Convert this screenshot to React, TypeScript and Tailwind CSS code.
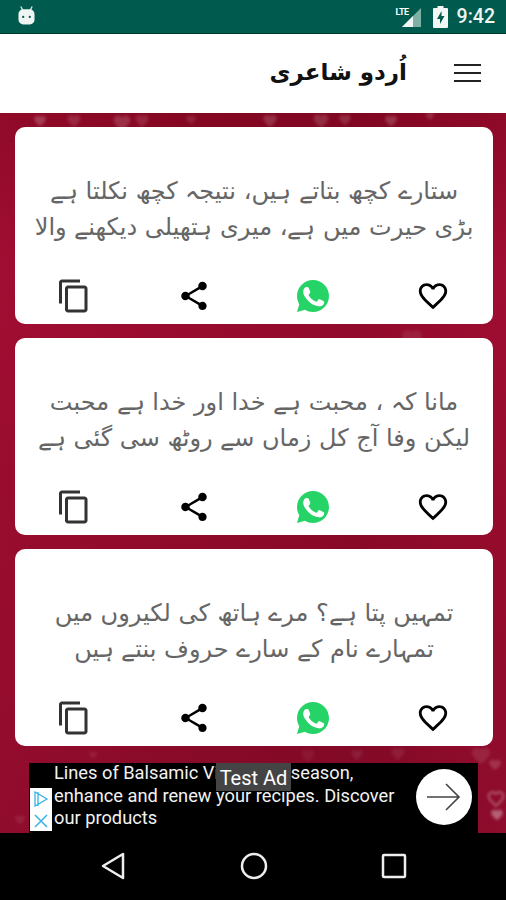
import React from "react";

const quotes = [
  ["ستارے کچھ بتاتے ہیں، نتیجہ کچھ نکلتا ہے", "بڑی حیرت میں ہے، میری ہتھیلی دیکھنے والا"],
  ["مانا کہ ، محبت ہے خدا اور خدا ہے محبت", "لیکن وفا آج کل زماں سے روٹھ سی گئی ہے"],
  ["تمہیں پتا ہے؟ مرے ہاتھ کی لکیروں میں", "تمہارے نام کے سارے حروف بنتے ہیں"],
];

// soft hearts in the wallpaper, page coordinates
const hearts = [
  { x: 33, y: 114, s: 14, o: 0.2 },
  { x: 66, y: 113, s: 16, o: 0.12 },
  { x: 112, y: 113, s: 20, o: 0.16 },
  { x: 134, y: 113, s: 16, o: 0.12 },
  { x: 185, y: 114, s: 12, o: 0.1 },
  { x: 262, y: 113, s: 16, o: 0.16 },
  { x: 312, y: 112, s: 18, o: 0.15 },
  { x: 338, y: 113, s: 14, o: 0.14 },
  { x: 384, y: 114, s: 14, o: 0.18 },
  { x: 425, y: 111, s: 10, o: 0.14 },
  { x: 400, y: 327, s: 24, o: 0.08 },
  { x: 300, y: 748, s: 16, o: 0.06 },
  { x: 350, y: 748, s: 14, o: 0.08 },
  { x: 390, y: 746, s: 16, o: 0.08 },
  { x: 470, y: 745, s: 22, o: 0.1 },
  { x: 488, y: 758, s: 14, o: 0.16 },
  { x: 490, y: 808, s: 14, o: 0.35 },
  { x: 14, y: 814, s: 12, o: 0.08 },
  { x: 88, y: 750, s: 10, o: 0.08 },
];

const HeartPath = "M12 21l-1.5-1.3C5.4 15.1 2 12.1 2 8.4 2 5.4 4.4 3 7.5 3c1.7 0 3.4.8 4.5 2.1C13.1 3.8 14.8 3 16.5 3 19.6 3 22 5.4 22 8.4c0 3.7-3.4 6.7-8.5 11.3L12 21z";

const CardIcons = () => (
  <div className="flex items-center h-[36px] pl-[41px]">
    <svg width="36" height="36" viewBox="0 0 24 24" fill="#333">
      <path d="M16 1H4c-1.1 0-2 .9-2 2v14h2V3h12V1zm3 4H8c-1.1 0-2 .9-2 2v14c0 1.1.9 2 2 2h11c1.1 0 2-.9 2-2V7c0-1.1-.9-2-2-2zm0 16H8V7h11v14z" />
    </svg>
    <svg width="34" height="34" viewBox="0 0 24 24" fill="#000" className="ml-[85px]">
      <path d="M18 16.08c-.76 0-1.44.3-1.96.77L8.91 12.7c.05-.23.09-.46.09-.7s-.04-.47-.09-.7l7.05-4.11c.54.5 1.25.81 2.04.81 1.66 0 3-1.34 3-3s-1.34-3-3-3-3 1.34-3 3c0 .24.04.47.09.7L8.04 9.81C7.5 9.31 6.79 9 6 9c-1.66 0-3 1.34-3 3s1.34 3 3 3c.79 0 1.5-.31 2.04-.81l7.12 4.16c-.05.21-.08.43-.08.65 0 1.61 1.31 2.92 2.92 2.92s2.92-1.31 2.92-2.92-1.31-2.92-2.92-2.92z" />
    </svg>
    <svg width="32" height="32" viewBox="0 0 32 32" className="ml-[86px]">
      <path fill="#25d366" d="M16 0C7.2 0 0 7.2 0 16c0 3 .8 5.800 2.300 8.300L0 32l8-2.200C10.300 31.200 13.100 32 16 32c8.800 0 16-7.200 16-16S24.800 0 16 0z" />
      <path fill="#fff" d="M11.600 7.800c-.4-.9-.8-.9-1.200-.9h-1c-.4 0-.9.100-1.400.7-.5.500-1.800 1.800-1.800 4.300s1.900 5 2.100 5.300c.3.400 3.600 5.700 8.900 7.800 4.400 1.700 5.300 1.400 6.200 1.300.9-.1 3-1.200 3.400-2.400.4-1.200.4-2.200.3-2.400-.1-.2-.5-.3-1-.6s-3-1.500-3.500-1.700c-.5-.2-.8-.3-1.100.2-.3.500-1.300 1.700-1.600 2-.3.300-.6.400-1.100.1-.5-.3-2.200-.8-4.200-2.600-1.500-1.400-2.600-3.100-2.900-3.600-.3-.5 0-.8.200-1 .2-.2.5-.6.800-.9.200-.3.300-.5.500-.9.200-.3.100-.7 0-.9-.2-.4-1.100-2.900-1.600-3.800z" />
    </svg>
    <svg width="34" height="34" viewBox="0 0 24 24" fill="#000" className="ml-[87px]">
      <path d="M16.500 3c-1.740 0-3.410.81-4.500 2.090C10.910 3.810 9.240 3 7.500 3 4.420 3 2 5.420 2 8.500c0 3.780 3.400 6.860 8.550 11.540L12 21.350l1.450-1.320C18.600 15.360 22 12.280 22 8.500 22 5.420 19.580 3 16.500 3zm-4.400 15.550l-.1.100-.1-.1C7.140 14.240 4 11.390 4 8.500 4 6.500 5.500 5 7.500 5c1.540 0 3.040.99 3.570 2.360h1.870C13.460 5.990 14.960 5 16.500 5c2 0 3.500 1.500 3.500 3.500 0 2.890-3.140 5.740-7.900 10.050z" />
    </svg>
  </div>
);

const App: React.FC = (): JSX.Element => (
  <div className="flex flex-col w-[506px] h-[900px] overflow-hidden relative font-['Roboto',sans-serif]">
    {/* status bar */}
    <div className="flex items-center justify-between h-[34px] bg-[#005a4e] border-b border-[#00382f] pl-[18px] pr-[11px] shrink-0">
      <svg width="17" height="19" viewBox="0 0 18 19" className="-mt-[2px]">
        <path d="M3 0l2 4M15 0l-2 4" stroke="#cfe3dc" strokeWidth="1.500" />
        <rect x="0.500" y="3" width="17" height="16" rx="5" fill="#eef5f2" />
        <circle cx="5.500" cy="11" r="1.200" fill="#005a4e" />
        <circle cx="12.500" cy="11" r="1.200" fill="#005a4e" />
      </svg>
      <div className="flex items-center">
        <div className="relative w-[26px] h-[22px] mr-[11px]">
          <svg width="26" height="22" viewBox="0 0 26 22">
            <path d="M25 2v19H6z" fill="#7fb0a6" />
            <path d="M17 10v11H6z" fill="#f2f7f5" />
          </svg>
          <span className="absolute left-0 top-0 text-[9px] leading-[12px] font-bold text-white tracking-[-0.5px]">LTE</span>
        </div>
        <svg width="15" height="22" viewBox="0 0 15 22" className="mr-[9px]">
          <path d="M4.500 0h6v2H14a1 1 0 0 1 1 1v18a1 1 0 0 1-1 1H1a1 1 0 0 1-1-1V3a1 1 0 0 1 1-1h3.500z" fill="#f2f7f5" />
          <path d="M8.500 5L4 13h3v5l4.500-8h-3z" fill="#005a4e" />
        </svg>
        <span className="text-[19.500px] leading-none font-medium text-[#eef5f2]">9:42</span>
      </div>
    </div>

    {/* toolbar */}
    <div className="flex items-center justify-end h-[79px] bg-white pr-[25px] shrink-0">
      <span dir="rtl" className="mr-[47px] -mt-[3px] text-[23px] leading-none font-bold text-[#111] font-['DejaVu_Sans',sans-serif]">
        اُردو شاعری
      </span>
      <div className="flex flex-col gap-[6px] w-[27px] -mt-[1px]">
        <div className="h-[2px] bg-[#222]" />
        <div className="h-[2px] bg-[#222]" />
        <div className="h-[2px] bg-[#222]" />
      </div>
    </div>

    {/* content */}
    <div className="relative flex-1 bg-[linear-gradient(180deg,#850722_0%,#9c0c30_22%,#900a29_55%,#8c0a29_80%,#850a29_100%)] overflow-hidden">
      <div className="absolute inset-0 bg-[linear-gradient(90deg,#b0123a44_0%,#00000000_35%,#5a041822_70%,#b0123a33_100%)]" />
      <div className="relative flex flex-col gap-[14px] pt-[14px] pl-[15px] pr-[13px]">
        {quotes.map((lines, i) => (
          <div key={i} className="flex flex-col h-[197px] bg-white rounded-[10px]">
            <div dir="rtl" className="flex flex-col items-center pt-[46px] h-[151px] text-[24px] leading-[36px] text-[#666] font-['DejaVu_Sans',sans-serif]">
              {lines.map((l) => (
                <span key={l} className="whitespace-nowrap">{l}</span>
              ))}
            </div>
            <CardIcons />
          </div>
        ))}
      </div>
    </div>

    {/* faint hearts over the wallpaper */}
    <svg width="506" height="900" viewBox="0 0 506 900" className="absolute left-0 top-0 pointer-events-none blur-[1.500px]">
      {hearts.map((h) => (
        <path key={h.x + "-" + h.y} d={HeartPath} fill="#ffffff" opacity={h.o} transform={`translate(${h.x} ${h.y}) scale(${h.s / 24})`} />
      ))}
      <path d={HeartPath} fill="none" stroke="#ffffff" strokeWidth="2.500" opacity="0.35" transform="translate(487 790) scale(0.75)" />
    </svg>

    {/* ad banner */}
    <div className="absolute left-[29px] top-[763px] flex w-[449px] h-[70px] bg-black">
      <div className="flex flex-col justify-end w-[22px] h-[70px] shrink-0 pl-[1px]">
        <div className="flex flex-col items-center justify-around w-[22px] h-[43px] bg-white mb-[2px]">
          <svg width="16" height="16" viewBox="0 0 16 16" fill="none" stroke="#35b3e6" strokeWidth="1.300">
            <path d="M2 1l12 7-12 7zM5 1v14" />
          </svg>
          <svg width="14" height="14" viewBox="0 0 14 14" stroke="#35b3e6" strokeWidth="1.500">
            <path d="M1 1l12 12M13 1L1 13" />
          </svg>
        </div>
      </div>
      <div className="pl-[3px] w-[350px] text-[18.250px] leading-[22.500px] text-[#f2f2f2] font-['Roboto',sans-serif] whitespace-pre -mt-[1px]">
        <div>
          Lines of Balsamic V<span className="tracking-[-1.100px]">inegar this </span>season,
        </div>
        <div>enhance and renew your recipes. Discover</div>
        <div>our products</div>
      </div>
      <div className="absolute right-[6px] top-[6px] flex items-center justify-center w-[56px] h-[56px] rounded-full bg-white">
        <svg width="36" height="32" viewBox="0 0 36 32" fill="none" stroke="#444" strokeWidth="1.600">
          <path d="M1 16h32M20 3l13 13-13 13" />
        </svg>
      </div>
      <div className="absolute left-[187px] top-0 flex items-center justify-center w-[75px] h-[28px] bg-[#444] text-[20px] text-white pt-[2px]">
        Test Ad
      </div>
    </div>

    {/* nav bar */}
    <div className="flex items-center justify-center h-[67px] bg-black shrink-0 gap-[112px] pb-[2px] pl-[2px]">
      <svg width="28" height="28" viewBox="0 0 28 28" fill="none" stroke="#eee" strokeWidth="2.500" strokeLinejoin="round">
        <path d="M23 2v24L3 14z" />
      </svg>
      <svg width="28" height="28" viewBox="0 0 28 28" fill="none" stroke="#eee" strokeWidth="2.500">
        <circle cx="14" cy="14" r="12" />
      </svg>
      <svg width="28" height="28" viewBox="0 0 28 28" fill="none" stroke="#eee" strokeWidth="2.500" strokeLinejoin="round">
        <rect x="3" y="3" width="22" height="22" rx="1" />
      </svg>
    </div>
  </div>
);

export default App;
